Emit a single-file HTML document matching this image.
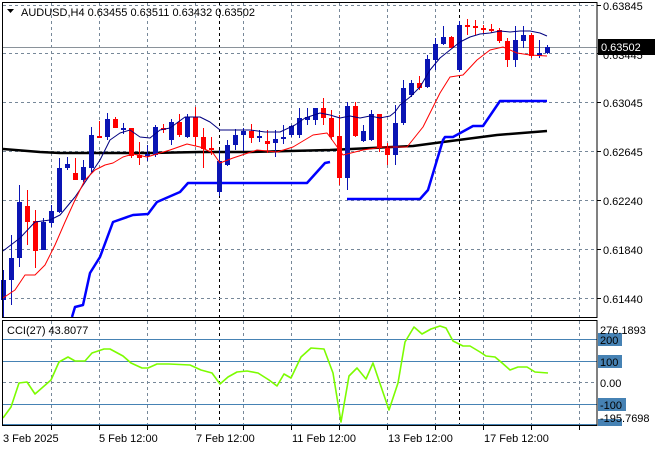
<!DOCTYPE html>
<html><head><meta charset="utf-8"><style>
body{margin:0;background:#fff;width:660px;height:450px;overflow:hidden}
svg{position:absolute;left:0;top:0}
text{font-family:"Liberation Sans",sans-serif;font-size:11px}
</style></head><body>
<svg id="s" width="660" height="450" xmlns="http://www.w3.org/2000/svg">
<g id="grid"></g>
<g id="plot"></g>
<rect x="2.5" y="2.5" width="594.5" height="315" fill="none" stroke="#000"/>
<rect x="2.5" y="320.5" width="594.5" height="105" fill="none" stroke="#000"/>
<g fill="#000">
<text x="21" y="16">AUDUSD,H4  0.63455 0.63511 0.63432 0.63502</text>
<text x="7" y="334">CCI(27) 43.8077</text>
<text x="603" y="10">0.63845</text>
<text x="603" y="59">0.63445</text>
<text x="603" y="107">0.63045</text>
<text x="603" y="156">0.62645</text>
<text x="603" y="205">0.62240</text>
<text x="603" y="254">0.61840</text>
<text x="603" y="303">0.61440</text>
</g>
<path d="M7 9 L14 9 L10.5 13 Z" fill="#000"/>
<rect x="598" y="39" width="57" height="16" fill="#000"/>
<text x="601" y="51" fill="#fff">0.63502</text>
<rect x="598" y="333" width="24" height="13" fill="#4682b4"/>
<rect x="598" y="355" width="24" height="13" fill="#4682b4"/>
<rect x="598" y="398" width="28" height="13" fill="#4682b4"/>
<rect x="598" y="419" width="24" height="7" fill="#4682b4"/>
<g fill="#000">
<text x="600" y="334">276.1893</text>
<text x="600" y="344">200</text>
<text x="600" y="366">100</text>
<text x="600" y="387">0.00</text>
<text x="600" y="409">-100</text>
<text x="600" y="422">-195.7698</text>
<text x="3" y="442">3 Feb 2025</text>
<text x="99" y="442">5 Feb 12:00</text>
<text x="196" y="442">7 Feb 12:00</text>
<text x="292" y="442">11 Feb 12:00</text>
<text x="388" y="442">13 Feb 12:00</text>
<text x="484" y="442">17 Feb 12:00</text>
</g>
</svg>
<script>
var NS="http://www.w3.org/2000/svg";
function el(p,t,a){var e=document.createElementNS(NS,t);for(var k in a)e.setAttribute(k,a[k]);document.getElementById(p).appendChild(e);return e;}
for(var i=0;i<12;i++){var x=51.5+48*i;if(x>596)break;
 el('grid','line',{x1:x,y1:3,x2:x,y2:317,stroke:'#778899','stroke-dasharray':'3,3'});
 el('grid','line',{x1:x,y1:321,x2:x,y2:425,stroke:'#778899','stroke-dasharray':'3,3'});
 el('grid','line',{x1:x,y1:426,x2:x,y2:430,stroke:'#000'});}
[219.5,459.5].forEach(function(x){el('grid','line',{x1:x,y1:3,x2:x,y2:317,stroke:'#000','stroke-dasharray':'3,3'});el('grid','line',{x1:x,y1:321,x2:x,y2:425,stroke:'#000','stroke-dasharray':'3,3'});});
[5.5,53.5,102.5,151.5,200.5,249.5,298.5].forEach(function(y){el('grid','line',{x1:3,y1:y,x2:597,y2:y,stroke:'#778899','stroke-dasharray':'3,3'});el('grid','line',{x1:597,y1:y,x2:601,y2:y,stroke:'#000'});});
el('grid','line',{x1:3,y1:47.5,x2:597,y2:47.5,stroke:'#8a929a'});
[339.5,361.5,404.5].forEach(function(y){el('grid','line',{x1:3,y1:y,x2:597,y2:y,stroke:'#4682b4'});});
el('grid','line',{x1:3,y1:382.5,x2:597,y2:382.5,stroke:'#778899','stroke-dasharray':'3,3'});
el('grid','line',{x1:3,y1:424.5,x2:597,y2:424.5,stroke:'#4682b4'});
function pl(pts,c,w){el('plot','polyline',{points:pts.map(function(p){return p.join(',')}).join(' '),fill:'none',stroke:c,'stroke-width':w,'stroke-linejoin':'round'});}
pl([[3,149],[40,152],[60,153],[150,153],[200,152],[250,152],[330,150],[413,146],[443,142],[497,135],[547,131]],'#000',2.5);
pl([[72,317],[75,307],[83,305],[90,273],[100,257],[113,222],[133,215],[148,214],[157,202],[180,192],[188,183],[307,183],[325,163],[330,162]],'#0000ff',2.5);
pl([[347,199],[420,199],[428,190],[443,140],[445,137],[453,137],[473,126],[483,126],[500,101],[547,101]],'#0000ff',2.5);
var C=[[300,280,270,318,1],[280,258,235,305,1],[258,202,185,267,1],[206,222,190,245,0],[221,251,210,268,0],[250,222,218,250,1],[223,211,205,227,1],[212,168,158,213,1],[168,164,157,170,1],[173,180,158,180,0],[180,167,160,182,1],[168,135,127,172,1],[136,138,121,138,0],[137,119,113,140,1],[119,128,117,128,0],[129,128,123,134,1],[128,156,128,158,0],[155,158,142,165,0],[156,154,145,161,1],[155,127,125,157,1],[128,130,124,133,0],[140,122,119,145,1],[122,135,114,137,0],[137,117,114,138,1],[117,137,107,146,0],[137,149,128,168,0],[148,150,137,155,0],[192,161,150,196,1],[165,145,140,166,1],[145,135,129,150,1],[135,131,128,151,1],[131,138,124,143,0],[138,136,130,142,1],[141,144,130,153,0],[143,139,130,157,1],[139,137,125,144,1],[135,126,125,137,1],[135,118,108,138,1],[120,117,108,125,1],[120,108,108,125,1],[108,118,98,125,0],[118,137,110,140,0],[136,178,115,185,0],[178,106,102,190,1],[106,136,102,137,0],[141,131,125,142,1],[140,114,110,141,1],[114,148,114,152,0],[148,155,143,165,0],[155,123,105,165,1],[123,88,80,125,1],[95,83,80,97,1],[83,88,76,90,0],[87,59,55,88,1],[60,44,38,70,1],[44,37,26,45,1],[37,48,36,48,0],[70,25,21,72,1],[25,27,19,35,0],[26,27,20,35,0],[28,29,25,33,0],[29,31,24,33,0],[30,41,28,43,0],[41,60,38,67,0],[60,40,26,67,1],[41,35,26,48,1],[35,56,33,58,0],[56,53,40,58,1],[53,47,45,54,1]];
C.forEach(function(c,k){var x=Math.round(3.3+8*k);var col=c[4]?'#0a14b4':'#ff0000';
 el('plot','line',{x1:x+0.5,y1:c[2],x2:x+0.5,y2:c[3],stroke:col});
 var t=Math.min(c[0],c[1]),h=Math.max(2,Math.abs(c[0]-c[1]));
 el('plot','rect',{x:x-2,y:t,width:5,height:h,fill:col});});
pl([[3,251],[20,238],[35,222],[50,220],[60,215],[75,197],[90,175],[100,160],[110,140],[120,133],[130,130],[140,137],[150,138],[160,130],[170,128],[185,117],[200,117],[210,122],[220,130],[235,130],[250,130],[265,132],[280,132],[295,125],[305,118],[320,113],[330,115],[340,118],[350,116],[360,118],[370,116],[380,118],[390,116],[395,112],[400,105],[410,97],[420,87],[430,70],[440,58],[450,50],[460,42],[470,37],[480,34],[490,33],[500,31],[510,32],[520,31],[530,31],[540,33],[547,36]],'#000080',1);
pl([[3,298],[15,290],[25,275],[35,275],[45,265],[55,245],[65,222],[75,200],[85,180],[95,170],[105,165],[113,163],[123,157],[133,154],[147,157],[160,153],[170,150],[187,144],[200,147],[213,153],[220,163],[233,158],[257,150],[277,152],[293,147],[313,135],[327,133],[330,137],[343,155],[363,150],[383,147],[407,147],[423,127],[440,93],[450,77],[463,75],[477,60],[490,50],[503,47],[517,53],[530,55],[547,56]],'#ff0000',1);
pl([[3,418],[11,407],[19,383],[27,382],[35,394],[51,380],[59,362],[68,357],[75,361],[85,361],[92,353],[104,349],[110,349],[123,356],[131,363],[142,368],[148,368],[157,364],[169,364],[190,365],[201,370],[212,373],[220,384],[228,377],[237,372],[247,371],[258,373],[269,380],[277,386],[284,374],[291,378],[301,357],[311,348],[324,349],[333,373],[341,422],[349,376],[357,368],[366,379],[373,363],[389,410],[398,383],[405,342],[414,327],[422,334],[431,329],[440,326],[446,328],[453,341],[463,346],[470,346],[480,352],[486,356],[495,357],[501,362],[510,370],[518,367],[527,367],[535,372],[548,373]],'#7cfc00',1.6);
</script>
</body></html>
